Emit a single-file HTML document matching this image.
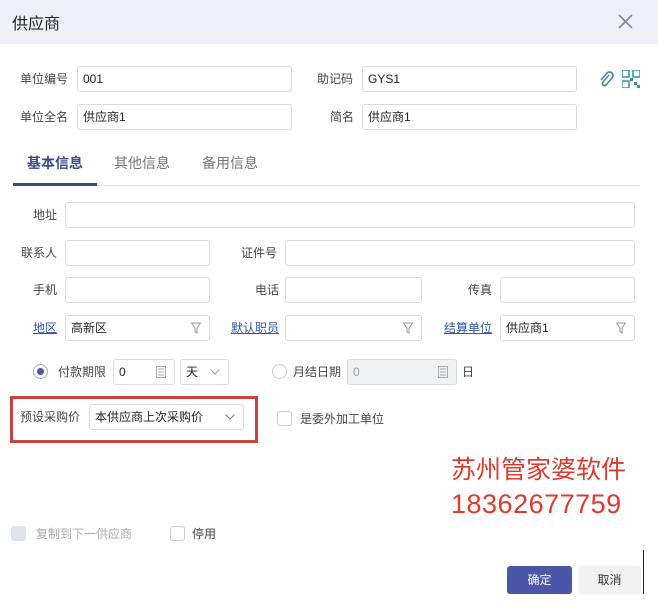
<!DOCTYPE html>
<html><head><meta charset="utf-8"><style>
*{box-sizing:border-box;margin:0;padding:0}
body{width:658px;height:614px;background:#fff;font-family:"Liberation Sans","Noto Sans CJK SC",sans-serif;font-size:12px;color:#333;position:relative;overflow:hidden}
.a{position:absolute}
.hd{left:0;top:0;width:658px;height:44px;background:#edf0f6}
.inp{position:absolute;border:1px solid #d8dbe0;border-radius:3px;height:26px;background:#fff;padding-left:5px;line-height:24px;font-size:12px;color:#222}
.lb{position:absolute;font-size:12px;color:#444;line-height:26px}
.lk{color:#2f55a4;text-decoration:underline}
.fl{position:absolute;right:8px;top:6px}
</style></head><body>
<div class="a hd"></div>
<div class="a" style="left:12px;top:10px;font-size:16px;color:#222">供应商</div>
<svg class="a" style="left:618px;top:14px" width="15" height="15"><path d="M1 1L14 14M14 1L1 14" stroke="#888" stroke-width="1.6"/></svg>

<div class="lb" style="left:20px;top:66px">单位编号</div><div class="inp" style="left:77px;top:66px;width:215px">001</div>
<div class="lb" style="left:317px;top:66px">助记码</div><div class="inp" style="left:362px;top:66px;width:215px">GYS1</div>
<svg class="a" style="left:598px;top:70px" width="16" height="18"><path d="M11 5L5 12a2 2 0 0 0 3 3l6-7a3.5 3.5 0 0 0-5-5L3 10" fill="none" stroke="#3a8ea0" stroke-width="1.6"/></svg>
<svg class="a" style="left:622px;top:70px" width="18" height="18" fill="#3a8ea0"><rect x="0" y="0" width="7" height="7" fill="none" stroke="#3a8ea0" stroke-width="1.5"/><rect x="11" y="0" width="7" height="7" fill="none" stroke="#3a8ea0" stroke-width="1.5"/><rect x="0" y="11" width="7" height="7" fill="none" stroke="#3a8ea0" stroke-width="1.5"/><rect x="12" y="12" width="3" height="3"/><rect x="8" y="8" width="3" height="3"/><rect x="15" y="15" width="3" height="3"/></svg>
<div class="lb" style="left:20px;top:104px">单位全名</div><div class="inp" style="left:77px;top:104px;width:215px">供应商1</div>
<div class="lb" style="left:330px;top:104px">简名</div><div class="inp" style="left:362px;top:104px;width:215px">供应商1</div>

<div class="a" style="left:27px;top:153px;font-size:14px;color:#3c4a8c;font-weight:bold">基本信息</div>
<div class="a" style="left:114px;top:153px;font-size:14px;color:#777">其他信息</div>
<div class="a" style="left:202px;top:153px;font-size:14px;color:#777">备用信息</div>
<div class="a" style="left:13px;top:185px;width:627px;height:1px;background:#e6e6e6"></div>
<div class="a" style="left:13px;top:183px;width:84px;height:3px;background:#3c4a7c"></div>

<div class="lb" style="left:33px;top:202px">地址</div><div class="inp" style="left:65px;top:202px;width:570px"></div>
<div class="lb" style="left:21px;top:240px">联系人</div><div class="inp" style="left:65px;top:240px;width:145px"></div>
<div class="lb" style="left:241px;top:240px">证件号</div><div class="inp" style="left:285px;top:240px;width:350px"></div>
<div class="lb" style="left:33px;top:277px">手机</div><div class="inp" style="left:65px;top:277px;width:145px"></div>
<div class="lb" style="left:255px;top:277px">电话</div><div class="inp" style="left:285px;top:277px;width:137px"></div>
<div class="lb" style="left:468px;top:277px">传真</div><div class="inp" style="left:500px;top:277px;width:135px"></div>

<div class="lb lk" style="left:33px;top:315px">地区</div><div class="inp" style="left:65px;top:315px;width:145px">高新区<svg class="fl" width="10" height="12"><path d="M0.5 1H9.5L6 6V11L4 10V6Z" fill="none" stroke="#999"/></svg></div>
<div class="lb lk" style="left:231px;top:315px">默认职员</div><div class="inp" style="left:285px;top:315px;width:137px"><svg class="fl" width="10" height="12"><path d="M0.5 1H9.5L6 6V11L4 10V6Z" fill="none" stroke="#999"/></svg></div>
<div class="lb lk" style="left:444px;top:315px">结算单位</div><div class="inp" style="left:500px;top:315px;width:135px">供应商1<svg class="fl" width="10" height="12"><path d="M0.5 1H9.5L6 6V11L4 10V6Z" fill="none" stroke="#999"/></svg></div>

<div class="a" style="left:33px;top:364px;width:15px;height:15px;border:1px solid #aab;border-radius:50%"><div class="a" style="left:3px;top:3px;width:7px;height:7px;border-radius:50%;background:#4a57a8"></div></div>
<div class="lb" style="left:58px;top:359px">付款期限</div>
<div class="inp" style="left:113px;top:359px;width:62px">0<svg class="a" style="right:8px;top:6px" width="10" height="12"><rect x="0.5" y="0.5" width="9" height="11" fill="none" stroke="#aaa"/><path d="M2 3H8M2 6H8M2 9H8" stroke="#aaa"/></svg></div>
<div class="inp" style="left:180px;top:359px;width:49px">天<svg class="a" style="right:8px;top:9px" width="10" height="6"><path d="M0.5 0.5L5 5L9.5 0.5" fill="none" stroke="#999"/></svg></div>
<div class="a" style="left:272px;top:364px;width:15px;height:15px;border:1px solid #ccc;border-radius:50%"></div>
<div class="lb" style="left:293px;top:359px">月结日期</div>
<div class="inp" style="left:347px;top:359px;width:110px;background:#f0f1f3;color:#999">0<svg class="a" style="right:8px;top:6px" width="10" height="12"><rect x="0.5" y="0.5" width="9" height="11" fill="none" stroke="#aaa"/><path d="M2 3H8M2 6H8M2 9H8" stroke="#aaa"/></svg></div>
<div class="lb" style="left:462px;top:359px">日</div>

<div class="a" style="left:10px;top:396px;width:248px;height:47px;border:3px solid #c9423e"></div>
<div class="lb" style="left:20px;top:404px">预设采购价</div>
<div class="inp" style="left:89px;top:404px;width:155px">本供应商上次采购价<svg class="a" style="right:8px;top:9px" width="10" height="6"><path d="M0.5 0.5L5 5L9.5 0.5" fill="none" stroke="#777"/></svg></div>
<div class="a" style="left:277px;top:411px;width:15px;height:15px;border:1px solid #ccc;border-radius:3px"></div>
<div class="lb" style="left:300px;top:406px">是委外加工单位</div>

<div class="a" style="left:451px;top:454px;font-size:25px;color:#e03a2e;line-height:32px">苏州管家婆软件</div>
<div class="a" style="left:451px;top:488px;font-size:27px;color:#e03a2e;line-height:32px;letter-spacing:0.5px">18362677759</div>

<div class="a" style="left:11px;top:526px;width:15px;height:15px;border-radius:3px;background:#dfe3ea"></div>
<div class="lb" style="left:36px;top:521px;color:#aaa">复制到下一供应商</div>
<div class="a" style="left:170px;top:526px;width:15px;height:15px;border:1px solid #ccc;border-radius:3px"></div>
<div class="lb" style="left:192px;top:521px">停用</div>

<div class="a" style="left:507px;top:566px;width:65px;height:28px;background:#4a57a8;border-radius:3px;color:#fff;text-align:center;line-height:28px">确定</div>
<div class="a" style="left:578px;top:566px;width:63px;height:28px;background:#f2f2f2;border-radius:3px;color:#333;text-align:center;line-height:28px">取消</div>
<div class="a" style="left:643px;top:550px;width:1px;height:44px;background:#222"></div>
</body></html>
